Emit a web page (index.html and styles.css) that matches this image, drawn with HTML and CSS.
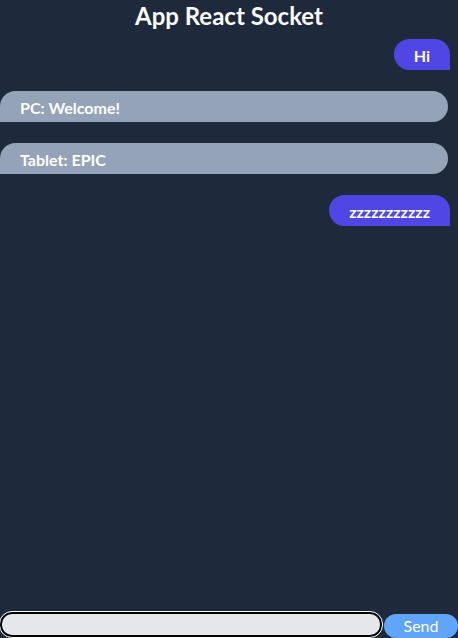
FILE: index.html
```html
<!DOCTYPE html>
<html>
<head>
<meta charset="utf-8">
<link rel="stylesheet" href="styles.css">
</head>
<body>
<div class="app">
  <h1 class="title">App React Socket</h1>
  <div class="messages">
    <div class="msg own">Hi</div>
    <div class="msg other">PC: Welcome!</div>
    <div class="msg other">Tablet: EPIC</div>
    <div class="msg own">zzzzzzzzzzz</div>
  </div>
  <form class="composer">
    <input class="field" type="text">
    <button class="send" type="button">Send</button>
  </form>
</div>
</body>
</html>
```
FILE: styles.css
```css
html, body {
  margin: 0;
  padding: 0;
  height: 100%;
}
body {
  background: #1e293b;
  font-family: "Lato", "Noto Sans", sans-serif;
  color: #fff;
}
.app {
  display: flex;
  flex-direction: column;
  height: 100vh;
}
.title {
  margin: 0;
  text-align: center;
  font-size: 24px;
  line-height: 32px;
  font-weight: 700;
}
.messages {
  flex: 1;
  display: flex;
  flex-direction: column;
  gap: 21px;
  padding-top: 7px;
}
.msg {
  height: 31px;
  display: flex;
  align-items: center;
  font-size: 16px;
  font-weight: 700;
  box-sizing: border-box;
  padding-top: 1px;
}
.own {
  align-self: flex-end;
  margin-right: 8px;
  padding-left: 20px;
  padding-right: 20px;
  background: #4f46e5;
  border-radius: 16px 16px 0 16px;
}
.other {
  margin-right: 10px;
  padding-left: 20px;
  background: #94a3b8;
  border-radius: 16px 16px 16px 0;
}
.composer {
  display: flex;
  align-items: flex-end;
  margin: 0;
}
.field {
  flex: 1;
  margin: 0;
  height: 25px;
  box-sizing: border-box;
  background: #e5e7eb;
  border: 2px solid #000;
  border-radius: 12px;
  outline: 1px solid #fff;
  margin-bottom: 1px;
}
.send {
  width: 74px;
  height: 24px;
  margin-left: 2px;
  background: #60a5fa;
  color: #fff;
  border: none;
  border-radius: 12px;
  font-family: "Lato", "Noto Sans", sans-serif;
  font-size: 16px;
  padding: 0 0 1px 0;
}
```
